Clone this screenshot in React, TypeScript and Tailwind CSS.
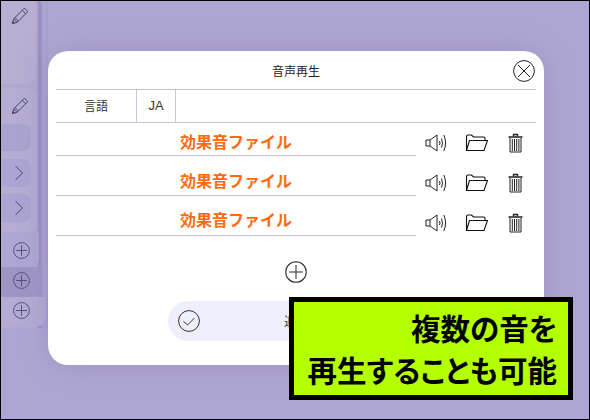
const jp = { fontFamily: '"Noto Sans CJK JP", sans-serif' };

function Pencil() {
  return (
    <svg width="18" height="18" viewBox="0 0 18 18" fill="none" stroke="#4a4468" strokeWidth="1">
      <path d="M1.500 16.500l1.200-4.600L12.600 2a1.300 1.300 0 0 1 1.800 0l1.600 1.600a1.300 1.300 0 0 1 0 1.800L6.100 15.300z" />
      <path d="M2.700 11.900l3.400 3.400M4 10.600l3.400 3.400M11.300 3.300l3.400 3.400M1.500 16.500l2-.5-1.500-1.500z" />
    </svg>
  );
}

function Chevron() {
  return (
    <svg width="10" height="16" viewBox="0 0 10 16" fill="none" stroke="#4a4468" strokeWidth="1">
      <path d="M1.500 1l7 7-7 7" />
    </svg>
  );
}

function CirclePlus({ size = 17, color = '#4a4468' }: { size?: number; color?: string }) {
  return (
    <svg width={size} height={size} viewBox="0 0 18 18" fill="none" stroke={color} strokeWidth="0.9">
      <circle cx="9" cy="9" r="8.400" />
      <path d="M9 3.200v11.600M3.200 9h11.600" />
    </svg>
  );
}

function Speaker() {
  return (
    <svg width="23" height="20" viewBox="0 0 23 20" fill="none" stroke="#222" strokeWidth="1">
      <path d="M1 7h4v6H1zM5 7l7-5v16l-7-5" />
      <path d="M14.500 8q1 2 0 4M16.500 5.500q2 4.500 0 9M18.800 2q3.500 8 0 16" />
    </svg>
  );
}

function Folder() {
  return (
    <svg width="23" height="18" viewBox="0 0 23 18" fill="none" stroke="#111" strokeWidth="1.100">
      <path d="M1.500 16.500V2.500q0-1.500 1.500-1.500h3.500l2 2h10q1.500 0 1.500 1.500V6" />
      <path d="M1.500 16.500L4.500 6.500h18l-3.500 10z" />
    </svg>
  );
}

function Trash() {
  return (
    <svg width="15" height="20" viewBox="0 0 15 20" fill="none" stroke="#222" strokeWidth="1">
      <path d="M0.500 4h14" strokeWidth="1.500" />
      <path d="M5.500 3.500V1.500h4v2" strokeWidth="1.400" />
      <path d="M2 5v14h11V5M4.300 6v12M6.500 6v12M8.700 6v12M10.900 6v12" />
    </svg>
  );
}

function SoundRow({ leading }: { leading: string }) {
  return (
    <div className="flex h-[40px] first:h-[33px] items-end">
      <div
        className={`w-[360px] h-[26px] border-b border-[#c9c4dd] text-center text-[16px] font-bold text-[#ff6a0d] ${leading}`}
        style={jp}
      >
        効果音ファイル
      </div>
      <div className="flex-1 flex items-center pl-[9px] h-[26px] gap-[17px]">
        <Speaker />
        <Folder />
        <span className="ml-[3px] flex">
          <Trash />
        </span>
      </div>
    </div>
  );
}

function Sidebar() {
  return (
    <div className="w-[47px] h-[327px] flex flex-col bg-[linear-gradient(to_right,#b0a8d3_0,#b0a8d3_36px,#988dc0_38px,#9b91c4_40px,#aca4d2_42px,#aca4d2_44px,#a89fcd_46px)]">
      <div className="h-[83px] w-[35px] rounded-br-[8px] bg-[#b7aed2] pl-[10px] pt-[6px]">
        <Pencil />
      </div>
      <div className="mt-[4px] h-[144px] w-[35px] rounded-r-[8px] bg-[#b5add3] pt-[9px]">
        <div className="pl-[10px] h-[26px]">
          <Pencil />
        </div>
        <div className="mt-[1px] h-[27px] w-[30px] rounded-r-[8px] bg-[#aba3cf]" />
        <div className="mt-[8px] h-[28px] w-[30px] rounded-r-[8px] bg-[#aca4d2] flex items-center pl-[13px]">
          <Chevron />
        </div>
        <div className="mt-[7px] h-[28px] w-[30px] rounded-r-[8px] bg-[#aca4d2] flex items-center pl-[13px]">
          <Chevron />
        </div>
      </div>
      <div className="h-[35px] w-[38px] rounded-br-[8px] bg-[#afa7d3] flex items-center pl-[12px] pt-[2px]">
        <CirclePlus />
      </div>
      <div className="h-[30px] w-[41px] rounded-br-[8px] bg-[#9f95c5] flex items-center pl-[12px] pb-[4px]">
        <CirclePlus />
      </div>
      <div className="h-[30px] w-[45px] rounded-br-[10px] bg-[#b4acd4] flex items-center pl-[12px] pb-[4px]">
        <CirclePlus />
      </div>
    </div>
  );
}

export default function App() {
  return (
    <div className="relative w-[590px] h-[420px] overflow-hidden border border-black bg-[#aea6d2]">
      <Sidebar />

      {/* sound dialog */}
      <div
        className="absolute left-[47px] top-[50px] w-[496px] h-[314px] rounded-[20px] bg-white px-[8px] flex flex-col shadow-[0_0_30px_rgba(140,125,185,0.45)]"
        style={jp}
      >
        <div className="relative h-[38px] flex items-center justify-center pt-[2px] text-[12px] text-[#222]">
          音声再生
          <svg
            className="absolute right-[1px] top-[9px]"
            width="22"
            height="22"
            viewBox="0 0 22 22"
            fill="none"
            stroke="#222"
            strokeWidth="1"
          >
            <circle cx="11" cy="11" r="10.400" />
            <path d="M5 5l12 12M17 5L5 17" />
          </svg>
        </div>
        <div className="flex h-[34px] border-y border-[#c9c4dd] text-[12px] text-[#333]">
          <div className="w-[81px] border-r border-[#c9c4dd] flex items-center justify-center">言語</div>
          <div className="w-[39px] border-r border-[#c9c4dd] flex items-center justify-center font-['Liberation_Sans',sans-serif] text-[13px]">
            JA
          </div>
        </div>
        <div>
          <SoundRow leading="leading-[22px]" />
          <SoundRow leading="leading-[20px]" />
          <SoundRow leading="leading-[18px]" />
        </div>
        <div className="flex justify-center mt-[25px]">
          <CirclePlus size={22} color="#333" />
        </div>
        <div className="mt-[18px] ml-[112px] w-[300px] h-[40px] rounded-full bg-[#efeefc] flex items-center pl-[10px]">
          <svg width="22" height="22" viewBox="0 0 22 22" fill="none" stroke="#333" strokeWidth="1">
            <circle cx="11" cy="11" r="10.400" />
            <path d="M5.500 11.500l4 3.500 7-7" />
          </svg>
          <span className="ml-[84px] text-[12px] text-[#333]">追加</span>
        </div>
      </div>

      {/* caption */}
      <div
        className="absolute left-[288px] top-[296px] w-[284px] h-[103px] border-[5px] border-black bg-[#b4ff00] pr-[11px] pt-[4px] text-right text-[29.500px] leading-[42px] font-bold text-black whitespace-nowrap [font-feature-settings:'palt']"
        style={jp}
      >
        <div>複数の音を</div>
        <div>再生することも可能</div>
      </div>
    </div>
  );
}
